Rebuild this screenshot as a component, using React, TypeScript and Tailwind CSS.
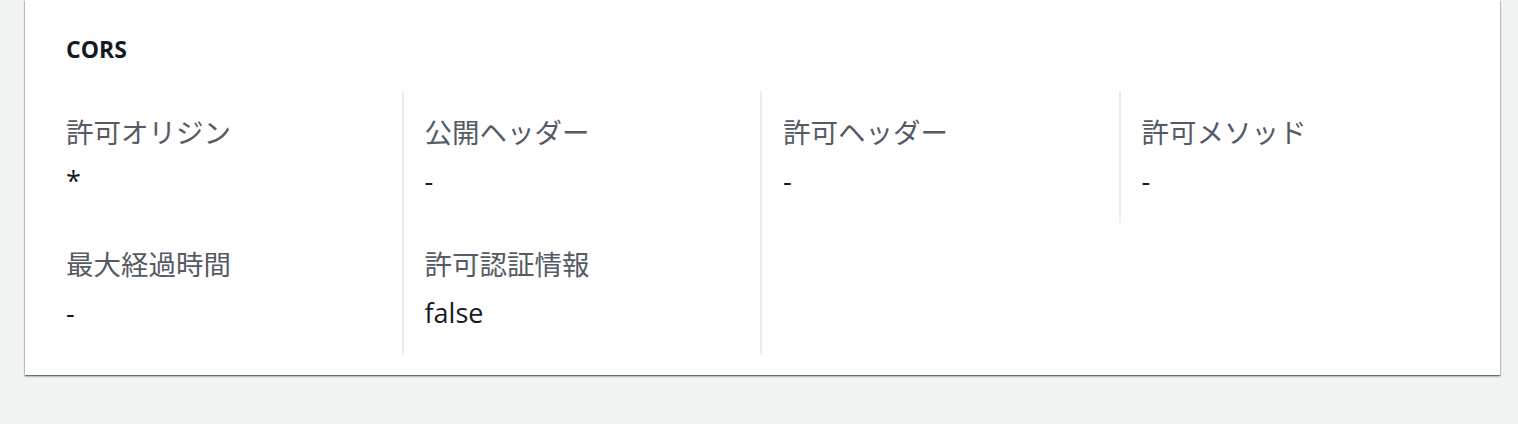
import React from "react";

type Item = { label: string; value: string };

const items: Item[] = [
  { label: "許可オリジン", value: "*" },
  { label: "公開ヘッダー", value: "-" },
  { label: "許可ヘッダー", value: "-" },
  { label: "許可メソッド", value: "-" },
  { label: "最大経過時間", value: "-" },
  { label: "許可認証情報", value: "false" },
];

export default function App() {
  return (
    <div
      className="w-[1518px] h-[424px] bg-[#f2f3f3] overflow-hidden"
      style={{ fontFamily: '"Open Sans", "Noto Sans CJK JP", sans-serif' }}
    >
      <div className="ml-[25px] w-[1475px] bg-white pt-[35px] pb-[20px] pl-[20px] pr-[21px] shadow-[0_1px_1px_0_rgba(0,28,36,0.3),1px_1px_1px_0_rgba(0,28,36,0.15),-1px_1px_1px_0_rgba(0,28,36,0.15),0_2px_2px_0_rgba(0,28,36,0.2)]">
        <h2 className="pl-[21px] text-[23px] leading-[28px] font-bold text-[#16191f] mb-[28px]">
          CORS
        </h2>
        <div className="grid grid-cols-4">
          {items.map((it, i) => (
            <div
              key={it.label}
              className={
                (i % 4 === 3 ? "" : "border-r-2 border-[#eaeded] ") +
                "pl-[21px] pt-[22px] pb-[22px]"
              }
            >
              <div className="text-[27.5px] leading-[40px] text-[#545b64]">
                {it.label}
              </div>
              <div className="mt-[8px] text-[27px] leading-[40px] text-[#16191f]">
                {it.value}
              </div>
            </div>
          ))}
        </div>
      </div>
    </div>
  );
}
